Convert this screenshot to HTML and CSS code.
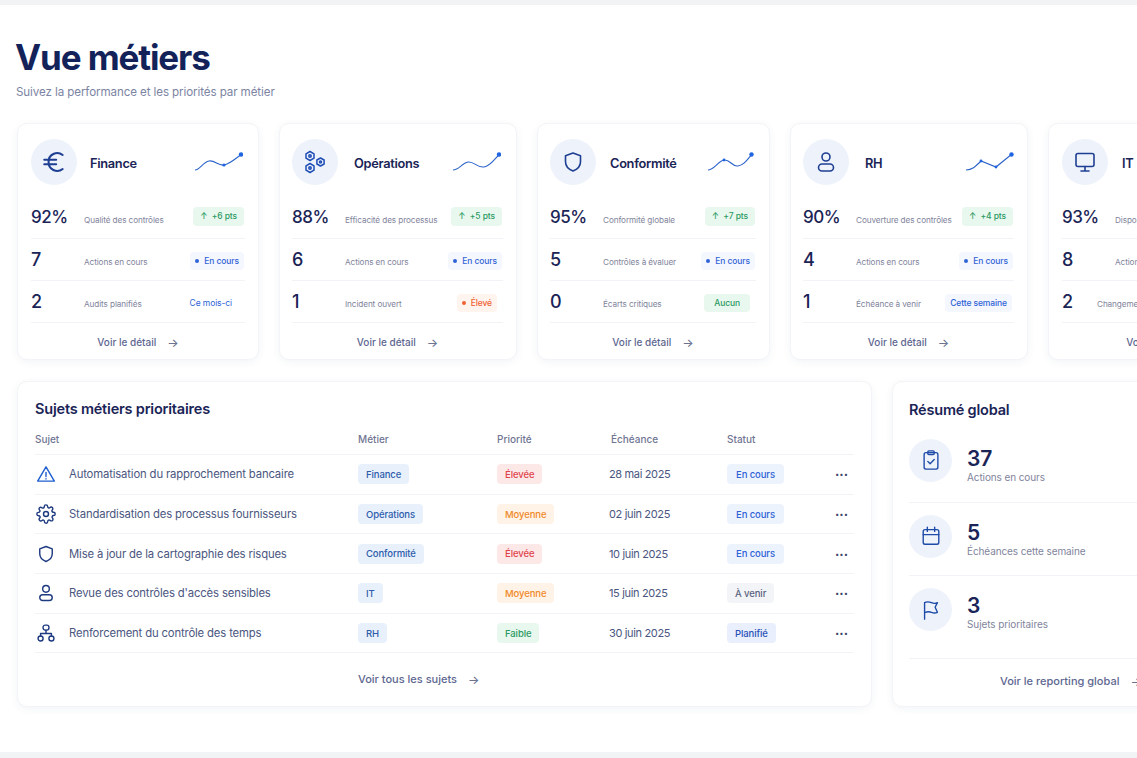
FILE: index.html
```html
<!DOCTYPE html>
<html lang="fr">
<head>
<meta charset="utf-8">
<title>Vue métiers</title>
<link rel="stylesheet" href="styles.css">
</head>
<body>
<div class="band-top"></div>
<main class="page">
  <header class="head">
    <h1>Vue métiers</h1>
    <p>Suivez la performance et les priorités par métier</p>
  </header>

  <section class="cards">
    <article class="card c1">
      <div class="card-top">
        <span class="circle"><svg class="ic ic-strong" viewBox="0 0 24 24"><path d="M20 5.500A8 8 0 0 0 7 12a8 8 0 0 0 13 6.500M3 10h11M3 14h11"/></svg></span>
        <h2>Finance</h2>
        <svg class="spark" viewBox="0 0 48 20"><path d="M0 18C5 18 8 10 14 9s9 5 15 4S41 6 47 2"/><circle cx="29" cy="13" r="1.600"/><circle cx="46" cy="2.500" r="2.200"/></svg>
      </div>
      <div class="row"><b class="big">92%</b><span class="lab">Qualité des contrôles</span><span class="chip up">↑ &nbsp;+6 pts</span></div>
      <div class="row"><b>7</b><span class="lab">Actions en cours</span><span class="chip run"><i></i>En cours</span></div>
      <div class="row"><b>2</b><span class="lab">Audits planifiés</span><span class="chip plan">Ce mois-ci</span></div>
      <a class="more">Voir le détail <span class="arr">→</span></a>
    </article>

    <article class="card c2">
      <div class="card-top">
        <span class="circle"><svg class="ic ic-gears" viewBox="0 0 24 24"><path d="M7 1.500l4 2.300v4.400l-4 2.300-4-2.300V3.800zM7 13.500l4 2.300v4.400l-4 2.300-4-2.300v-4.400zM17.500 8l3.600 2v4l-3.600 2-3.600-2v-4z"/><circle cx="7" cy="6" r="1.200"/><circle cx="7" cy="18" r="1.200"/><circle cx="17.500" cy="12" r="1"/></svg></span>
        <h2>Opérations</h2>
        <svg class="spark" viewBox="0 0 48 20"><path d="M0 18C6 18 9 11 15 10s9 6 16 5S41 7 47 2"/><circle cx="46" cy="2.500" r="2.200"/></svg>
      </div>
      <div class="row"><b class="big">88%</b><span class="lab">Efficacité des processus</span><span class="chip up">↑ &nbsp;+5 pts</span></div>
      <div class="row"><b>6</b><span class="lab">Actions en cours</span><span class="chip run"><i></i>En cours</span></div>
      <div class="row"><b>1</b><span class="lab">Incident ouvert</span><span class="chip high"><i></i>Élevé</span></div>
      <a class="more">Voir le détail <span class="arr">→</span></a>
    </article>

    <article class="card c3">
      <div class="card-top">
        <span class="circle"><svg class="ic" viewBox="0 0 24 24"><path d="M12 3l7.500 2.800v6c0 4.500-3 7.500-7.500 9.200-4.500-1.700-7.500-4.700-7.500-9.200v-6z"/></svg></span>
        <h2>Conformité</h2>
        <svg class="spark" viewBox="0 0 48 20"><path d="M2 18C8 18 12 9 18 8s8 7 14 6S41 8 46 2"/><circle cx="18" cy="8" r="1.400"/><circle cx="45.500" cy="2.500" r="2.200"/></svg>
      </div>
      <div class="row"><b class="big">95%</b><span class="lab">Conformité globale</span><span class="chip up">↑ &nbsp;+7 pts</span></div>
      <div class="row"><b>5</b><span class="lab">Contrôles à évaluer</span><span class="chip run"><i></i>En cours</span></div>
      <div class="row"><b>0</b><span class="lab">Écarts critiques</span><span class="chip none">Aucun</span></div>
      <a class="more">Voir le détail <span class="arr">→</span></a>
    </article>

    <article class="card c4">
      <div class="card-top">
        <span class="circle"><svg class="ic" viewBox="0 0 24 24"><circle cx="12" cy="7" r="4"/><rect x="4.500" y="14" width="15" height="7" rx="3.500"/></svg></span>
        <h2>RH</h2>
        <svg class="spark" viewBox="0 0 48 20"><path d="M0 18c6 0 9-3 15-9l15 6L46 2"/><circle cx="15" cy="9" r="1.400"/><circle cx="30" cy="15" r="1.400"/><circle cx="45.500" cy="2.500" r="2.200"/></svg>
      </div>
      <div class="row"><b class="big">90%</b><span class="lab">Couverture des contrôles</span><span class="chip up">↑ &nbsp;+4 pts</span></div>
      <div class="row"><b>4</b><span class="lab">Actions en cours</span><span class="chip run"><i></i>En cours</span></div>
      <div class="row"><b>1</b><span class="lab">Échéance à venir</span><span class="chip week">Cette semaine</span></div>
      <a class="more">Voir le détail <span class="arr">→</span></a>
    </article>

    <article class="card c5">
      <div class="card-top">
        <span class="circle"><svg class="ic" viewBox="0 0 24 24"><rect x="3" y="3.500" width="18" height="13" rx="2"/><path d="M12 16.500V21M8 21h8"/></svg></span>
        <h2>IT</h2>
      </div>
      <div class="row"><b class="big">93%</b><span class="lab">Disponibilité des services</span></div>
      <div class="row"><b>8</b><span class="lab">Actions en cours</span></div>
      <div class="row"><b class="tight">2</b><span class="lab">Changements planifiés</span></div>
      <a class="more">Voir le détail <span class="arr">→</span></a>
    </article>
  </section>

  <section class="bottom">
    <article class="panel">
      <h3>Sujets métiers prioritaires</h3>
      <div class="t-row t-head">
        <span>Sujet</span><span>Métier</span><span>Priorité</span><span class="hd-date">Échéance</span><span>Statut</span><span></span>
      </div>
      <div class="t-row">
        <span class="subj"><svg class="ic-s alert" viewBox="0 0 24 24"><path d="M12 3.500L22 20.500H2zM12 10v5M12 17.500v.5"/></svg>Automatisation du rapprochement bancaire</span>
        <span><em class="tag tag-m">Finance</em></span><span><em class="tag tag-r">Élevée</em></span><span class="date">28 mai 2025</span><span><em class="tag tag-b">En cours</em></span><span class="dots">···</span>
      </div>
      <div class="t-row">
        <span class="subj"><svg class="ic-s" viewBox="0 0 24 24"><circle cx="12" cy="12" r="3"/><path d="M19.400 15a1.650 1.650 0 0 0 .33 1.820l.06.06a2 2 0 1 1-2.830 2.830l-.06-.06a1.650 1.650 0 0 0-2.800 1.170V21a2 2 0 1 1-4 0v-.09A1.650 1.650 0 0 0 7.300 19.700l-.06.06a2 2 0 1 1-2.830-2.830l.06-.06a1.650 1.650 0 0 0-1.170-2.800H3a2 2 0 1 1 0-4h.09A1.650 1.650 0 0 0 4.300 7.300l-.06-.06a2 2 0 1 1 2.830-2.830l.06.06a1.650 1.650 0 0 0 2.800-1.170V3a2 2 0 1 1 4 0v.09a1.650 1.650 0 0 0 2.800 1.170l.06-.06a2 2 0 1 1 2.830 2.830l-.06.06a1.650 1.650 0 0 0 1.170 2.800H21a2 2 0 1 1 0 4h-.09a1.650 1.650 0 0 0-1.510 1z"/></svg>Standardisation des processus fournisseurs</span>
        <span><em class="tag tag-m">Opérations</em></span><span><em class="tag tag-o">Moyenne</em></span><span class="date">02 juin 2025</span><span><em class="tag tag-b">En cours</em></span><span class="dots">···</span>
      </div>
      <div class="t-row">
        <span class="subj"><svg class="ic-s" viewBox="0 0 24 24"><path d="M12 3l7.500 2.800v6c0 4.500-3 7.500-7.500 9.200-4.500-1.700-7.500-4.700-7.500-9.200v-6z"/></svg>Mise à jour de la cartographie des risques</span>
        <span><em class="tag tag-m">Conformité</em></span><span><em class="tag tag-r">Élevée</em></span><span class="date">10 juin 2025</span><span><em class="tag tag-b">En cours</em></span><span class="dots">···</span>
      </div>
      <div class="t-row">
        <span class="subj"><svg class="ic-s" viewBox="0 0 24 24"><circle cx="12" cy="7" r="4"/><rect x="4.500" y="14" width="15" height="7" rx="3.500"/></svg>Revue des contrôles d'accès sensibles</span>
        <span><em class="tag tag-m">IT</em></span><span><em class="tag tag-o">Moyenne</em></span><span class="date">15 juin 2025</span><span><em class="tag tag-g">À venir</em></span><span class="dots">···</span>
      </div>
      <div class="t-row">
        <span class="subj"><svg class="ic-s" viewBox="0 0 24 24"><rect x="8.500" y="2.500" width="7" height="6" rx="2.500"/><circle cx="5.500" cy="18.500" r="3"/><circle cx="18.500" cy="18.500" r="3"/><path d="M12 8.500V12M5.500 15.500V12.500h13v3"/></svg>Renforcement du contrôle des temps</span>
        <span><em class="tag tag-m">RH</em></span><span><em class="tag tag-f">Faible</em></span><span class="date">30 juin 2025</span><span><em class="tag tag-p">Planifié</em></span><span class="dots">···</span>
      </div>
      <a class="more more-all">Voir tous les sujets <span class="arr">→</span></a>
    </article>

    <aside class="summary">
      <h3>Résumé global</h3>
      <div class="sum-row">
        <span class="circle sm"><svg class="ic-m" viewBox="0 0 24 24"><rect x="4.500" y="4" width="15" height="18" rx="2"/><rect x="8.500" y="2" width="7" height="4" rx="1.200"/><path d="M8.500 13.500l2.500 2.500 4.500-4.500"/></svg></span>
        <div class="sum-text"><strong>37</strong><small>Actions en cours</small></div>
      </div>
      <div class="sum-row">
        <span class="circle sm"><svg class="ic-m" viewBox="0 0 24 24"><rect x="3.500" y="5" width="17" height="16" rx="2"/><path d="M3.500 10.500h17M8 2.500V7M16 2.500V7"/></svg></span>
        <div class="sum-text"><strong>5</strong><small>Échéances cette semaine</small></div>
      </div>
      <div class="sum-row last">
        <span class="circle sm"><svg class="ic-m" viewBox="0 0 24 24"><path d="M5 22V4c3-1.500 5-1 7.500 0s4.500 1 6.500 0l-2.500 5 2.500 5.500c-2 1-4 1-6.500 0s-4.500-1-7.500.5"/></svg></span>
        <div class="sum-text"><strong>3</strong><small>Sujets prioritaires</small></div>
      </div>
      <a class="more more-sum">Voir le reporting global <span class="arr">→</span></a>
    </aside>
  </section>
</main>
<div class="band-bottom"></div>
</body>
</html>
```
FILE: styles.css
```css
* { box-sizing: border-box; }
html, body { margin: 0; height: 100%; }
body {
  width: 1137px;
  height: 758px;
  overflow: hidden;
  background: #fff;
  font-family: Inter, "Noto Sans", sans-serif;
  color: #1a2456;
  display: flex;
  flex-direction: column;
}
.band-top { height: 5px; background: #f2f3f5; flex: none; }
.band-bottom { height: 6px; background: #f2f3f5; flex: none; margin-top: auto; }
.page { padding: 0 0 0 17px; flex: none; }

.head { margin-left: -2px; padding-top: 31px; }
h1 { margin: 0; font-size: 35px; line-height: 42px; font-weight: 700; color: #13235a; letter-spacing: -1.1px; }
p { margin: 6px 0 0 1px; font-size: 11.600px; line-height: 16px; color: #7c84a3; letter-spacing: -0.1px; }

.cards { display: flex; gap: 20px; margin-top: 23px; width: 1300px; }
.card {
  flex: none;
  height: 237px;
  padding: 15px 13px 0;
  background: #fff;
  border: 1px solid #f3f4f7;
  border-radius: 10px;
  box-shadow: 0 2px 8px rgba(40, 60, 110, 0.06);
}
.c1 { width: 242px; }
.c2 { width: 238px; padding-left: 12px; }
.c3 { width: 233px; padding-left: 12px; }
.c4 { width: 238px; padding-left: 12px; }
.c5 { width: 238px; }
.card-top { display: flex; align-items: center; gap: 13px; height: 46px; margin-bottom: 12px; }
.c2 h2, .c4 h2 { margin-left: 3px; }
.c3 h2, .c5 h2 { margin-left: 1px; }
.card-top h2 { padding-top: 2px; }
.circle {
  flex: none;
  width: 46px;
  height: 46px;
  border-radius: 50%;
  background: #edf2fb;
  display: flex;
  align-items: center;
  justify-content: center;
}
.ic { width: 24px; height: 24px; fill: none; stroke: #1e3f92; stroke-width: 1.600; stroke-linecap: round; stroke-linejoin: round; }
.ic-strong { stroke-width: 1.900; width: 26px; height: 26px; }
.ic-gears { stroke: #1f4db5; stroke-width: 1.500; }
h2 { margin: 0; font-size: 12.800px; font-weight: 600; color: #1a2456; letter-spacing: -0.3px; }
.spark { margin-left: auto; margin-right: 2px; width: 48px; height: 20px; fill: none; stroke: #2b62c9; stroke-width: 1.100; }
.c4 .spark { margin-right: 0; }
.spark circle { fill: #1f64e0; stroke: none; }

.row { display: flex; align-items: center; height: 42px; border-bottom: 1px solid #f2f3f6; }
.row b { flex: none; width: 53px; font-size: 18px; font-weight: 500; color: #1a2456; }
.row b.big { font-size: 17px; letter-spacing: -0.5px; margin-bottom: 2px; }
.row b.tight { width: 35px; }
.lab { font-size: 8.200px; color: #7f849c; letter-spacing: -0.1px; white-space: nowrap; flex: 1; padding-top: 4px; }
.chip {
  flex: none;
  display: inline-flex;
  align-items: center;
  height: 18px;
  padding: 0 5px;
  margin-top: 2px;
  border-radius: 4px;
  font-size: 8.500px;
  font-weight: 500;
  letter-spacing: -0.1px;
  white-space: nowrap;
}
.chip i { width: 4px; height: 4px; border-radius: 50%; margin-right: 5px; background: currentColor; }
.up { background: #e9f8ef; color: #2b9a62; padding: 0 7px; margin: 0 1px 3px 0; height: 19px; }
.run { background: #f4f7fe; color: #2f63d6; margin-right: 1px; }
.plan { color: #2f63d6; margin-right: 8px; font-weight: 400; }
.high { background: #fff4ee; color: #ee6234; margin-right: 6px; }
.none { background: #e9f8ef; color: #2b9a62; padding: 0 10px; margin-right: 6px; }
.week { background: #f4f7fe; color: #2f63d6; margin-right: 2px; }

.more { display: flex; align-items: center; justify-content: center; gap: 11px; height: 38px; font-size: 10px; color: #5d6790; font-weight: 500; }
.arr { font-size: 12px; color: #6b7390; }

.bottom { display: flex; gap: 20px; margin-top: 21px; width: 1300px; }
.panel, .summary {
  flex: none;
  height: 326px;
  background: #fff;
  border: 1px solid #f3f4f7;
  border-radius: 10px;
  box-shadow: 0 2px 8px rgba(40, 60, 110, 0.06);
}
.panel { width: 855px; padding: 17px 17px 0; }
h3 { margin: 0; font-size: 14.500px; line-height: 20px; font-weight: 600; color: #1a2456; letter-spacing: -0.2px; }

.t-row {
  display: grid;
  grid-template-columns: 323px 139px 112px 118px 109px 18px;
  align-items: center;
  height: 39.700px;
  border-bottom: 1px solid #f2f3f6;
  font-size: 11.300px;
  color: #4a5680;
}
.t-head { height: 36px; padding-top: 4px; font-size: 10px; font-weight: 500; color: #6f7592; }
.hd-date { padding-left: 2px; }
.subj { display: flex; align-items: center; gap: 12px; letter-spacing: -0.15px; white-space: nowrap; }
.ic-s { flex: none; width: 22px; height: 20px; fill: none; stroke: #1e3a80; stroke-width: 1.700; stroke-linecap: round; stroke-linejoin: round; }
.alert { stroke: #1f5fd0; }
.date { font-size: 11px; letter-spacing: -0.35px; }
.dots { font-size: 13px; font-weight: 700; color: #3a4466; margin-left: -1px; }
.tag {
  display: inline-flex;
  align-items: center;
  height: 20px;
  padding: 0 8px;
  border-radius: 4px;
  font-style: normal;
  font-size: 9.500px;
  font-weight: 500;
  letter-spacing: -0.1px;
}
.tag-m { background: #e8f1fb; color: #2d5cab; }
.tag-r { background: #fde8e8; color: #e0434a; }
.tag-o { background: #fff2e6; color: #f08a2a; }
.tag-f { background: #e9f8ef; color: #2b9a62; }
.tag-b { background: #edf3fd; color: #2f63d6; padding: 0 9px; }
.tag-g { background: #f3f4f7; color: #5a6380; }
.tag-p { background: #e9effc; color: #2a52b8; }
.more-all { justify-content: flex-start; padding-left: 323px; height: 52px; font-size: 11px; }

.summary { width: 300px; padding: 18px 16px 0; }
.sum-row { display: flex; align-items: center; gap: 15px; height: 73px; border-bottom: 1px solid #f2f3f6; }
.sum-row:first-of-type { margin-top: 10px; }
.sum-row:first-of-type .circle { margin-bottom: 12px; }
.sum-row:first-of-type .sum-text { padding-bottom: 2px; }
.sum-row.last { height: 83px; padding-bottom: 10px; }
.circle.sm { width: 43px; height: 43px; margin-bottom: 6px; }
.sum-row.last .circle { margin-bottom: 5px; }
.ic-m { width: 22px; height: 22px; fill: none; stroke: #1e4aa8; stroke-width: 1.500; stroke-linecap: round; stroke-linejoin: round; }
strong { display: block; font-size: 21px; line-height: 25px; font-weight: 600; color: #1a2456; }
small { display: block; font-size: 10px; line-height: 13px; color: #7f849c; letter-spacing: -0.1px; }
.more-sum { justify-content: flex-start; padding-left: 91px; height: 44px; font-size: 11px; }
```
